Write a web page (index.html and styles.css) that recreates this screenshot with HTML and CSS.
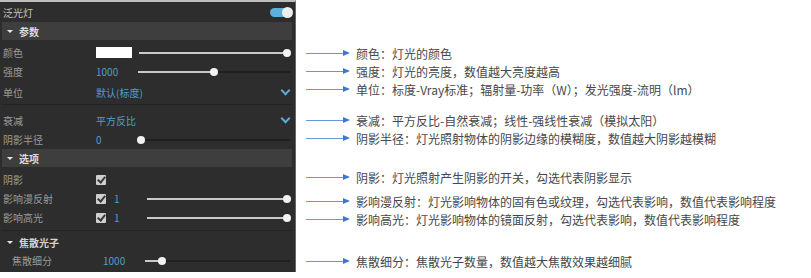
FILE: index.html
```html
<!DOCTYPE html>
<html lang="zh-CN">
<head>
  <meta charset="UTF-8">
  <title>泛光灯参数说明</title>
  <link rel="stylesheet" href="styles.css">
</head>
<body>
  <div class="page">
    <div class="panel">
      <div class="title">
        <span>泛光灯</span>
        <span class="toggle"><span class="toggle-knob"></span></span>
      </div>

      <div class="section"><span class="caret"></span>参数</div>
      <div class="row first">
        <span class="label">颜色</span>
        <span class="swatch"></span>
        <div class="slider"><div class="fill" style="width: 98%"></div><span class="knob" style="left: 98%"></span></div>
      </div>
      <div class="row">
        <span class="label">强度</span>
        <span class="value num">1000</span>
        <div class="slider"><div class="fill" style="width: 50%"></div><span class="knob" style="left: 50%"></span></div>
      </div>
      <div class="row select">
        <span class="label">单位</span>
        <span class="value">默认(标度)</span>
        <span class="chevron"></span>
      </div>
      <div class="divider"></div>
      <div class="row select gap">
        <span class="label">衰减</span>
        <span class="value">平方反比</span>
        <span class="chevron"></span>
      </div>
      <div class="row">
        <span class="label">阴影半径</span>
        <span class="value num">0</span>
        <div class="slider"><div class="fill" style="width: 2%"></div><span class="knob" style="left: 2%"></span></div>
      </div>

      <div class="section"><span class="caret"></span>选项</div>
      <div class="row first">
        <span class="label">阴影</span>
        <span class="check"></span>
      </div>
      <div class="row">
        <span class="label">影响漫反射</span>
        <span class="check"></span>
        <span class="value small">1</span>
        <div class="slider"><div class="fill" style="width: 98%"></div><span class="knob" style="left: 98%"></span></div>
      </div>
      <div class="row">
        <span class="label">影响高光</span>
        <span class="check"></span>
        <span class="value small">1</span>
        <div class="slider"><div class="fill" style="width: 98%"></div><span class="knob" style="left: 98%"></span></div>
      </div>
      <div class="divider low"></div>
      <div class="subsection"><span class="caret"></span>焦散光子</div>
      <div class="row sub">
        <span class="label">焦散细分</span>
        <span class="value num short">1000</span>
        <div class="slider"><div class="fill" style="width: 12%"></div><span class="knob" style="left: 12%"></span></div>
      </div>
    </div>

    <ul class="notes">
      <li class="g1"><span class="arrow"></span>颜色：灯光的颜色</li>
      <li><span class="arrow"></span>强度：灯光的亮度，数值越大亮度越高</li>
      <li><span class="arrow"></span>单位：标度-Vray标准；辐射量-功率（W）；发光强度-流明（lm）</li>
      <li class="g2"><span class="arrow"></span>衰减：平方反比-自然衰减；线性-强线性衰减（模拟太阳）</li>
      <li><span class="arrow"></span>阴影半径：灯光照射物体的阴影边缘的模糊度，数值越大阴影越模糊</li>
      <li class="g3"><span class="arrow"></span>阴影：灯光照射产生阴影的开关，勾选代表阴影显示</li>
      <li class="g4"><span class="arrow"></span>影响漫反射：灯光影响物体的固有色或纹理，勾选代表影响，数值代表影响程度</li>
      <li><span class="arrow"></span>影响高光：灯光影响物体的镜面反射，勾选代表影响，数值代表影响程度</li>
      <li class="g5"><span class="arrow"></span>焦散细分：焦散光子数量，数值越大焦散效果越细腻</li>
    </ul>
  </div>
</body>
</html>
```

FILE: styles.css
```css
body {
  margin: 0;
  background: #ffffff;
  font-family: "Noto Sans CJK SC", "Noto Sans", sans-serif;
}
.page {
  display: flex;
  align-items: flex-start;
}
.panel {
  width: 295px;
  height: 270px;
  background: #2d2d2d;
  border-top: 2px solid #bdbdbd;
  border-right: 1px solid #666;
  overflow: hidden;
  font-size: 10px;
  color: #9c9c9c;
}
.title {
  height: 20px;
  display: flex;
  align-items: center;
  justify-content: space-between;
  padding: 0 3px 0 3px;
  color: #c4c4c4;
}
.toggle {
  width: 22px;
  height: 9px;
  border-radius: 5px;
  background: #5db0d9;
  position: relative;
}
.toggle-knob {
  position: absolute;
  right: -1px;
  top: -1px;
  width: 11px;
  height: 11px;
  border-radius: 50%;
  background: #eeeeee;
}
.section {
  height: 18px;
  margin: 0 3px 0 2px;
  background: #3e3e3e;
  display: flex;
  align-items: center;
  color: #dcdcdc;
  font-weight: bold;
}
.caret {
  width: 0;
  height: 0;
  border-left: 3px solid transparent;
  border-right: 3px solid transparent;
  border-top: 3px solid #e6e6e6;
  margin: 0 6px 0 5px;
}
.subsection {
  height: 18px;
  margin-top: 2px;
  display: flex;
  align-items: center;
  color: #d4d4d4;
  font-weight: bold;
  padding-left: 2px;
}
.row {
  height: 19px;
  display: flex;
  align-items: center;
  padding-right: 5px;
}
.row.first {
  margin-top: 3px;
}
.row.select {
  margin-top: 2px;
}
.row.gap {
  margin-top: 6px;
}
.label {
  width: 96px;
  flex: none;
  padding-left: 3px;
  box-sizing: border-box;
}
.row.sub .label {
  width: 103px;
  padding-left: 12px;
}
.value {
  color: #4f9fcc;
}
.value.num {
  width: 42px;
  flex: none;
}
.value.short {
  width: 42px;
}
.value.small {
  width: 41px;
  flex: none;
  padding-left: 8px;
  box-sizing: border-box;
}
.swatch {
  width: 36px;
  height: 11px;
  background: #ffffff;
  flex: none;
  margin-right: 7px;
}
.slider {
  flex: 1;
  height: 2px;
  background: #1f1f1f;
  position: relative;
}
.fill {
  height: 2px;
  background: #c9c9c9;
}
.knob {
  position: absolute;
  top: -3px;
  width: 8px;
  height: 8px;
  margin-left: -4px;
  border-radius: 50%;
  background: #f2f2f2;
}
.chevron {
  margin-left: auto;
  margin-right: 1px;
  width: 5px;
  height: 5px;
  border-right: 2px solid #5aa8d4;
  border-bottom: 2px solid #5aa8d4;
  transform: translateY(-2px) rotate(45deg);
}
.divider {
  height: 1px;
  background: #242424;
  margin: 2px 3px 0 2px;
}
.divider.low {
  margin-top: 3px;
}
.check {
  width: 10px;
  height: 10px;
  flex: none;
  border-radius: 1px;
  background: #cfcfcf;
  position: relative;
}
.check::after {
  content: "";
  position: absolute;
  left: 3px;
  top: 0px;
  width: 3px;
  height: 6px;
  border-right: 2px solid #3a3a3a;
  border-bottom: 2px solid #3a3a3a;
  transform: rotate(40deg);
}
.notes {
  list-style: none;
  margin: 44px 0 0 10px;
  padding: 0;
  font-size: 12px;
  color: #474747;
}
.notes li {
  height: 18px;
  display: flex;
  align-items: center;
  white-space: nowrap;
}
.notes .g2 {
  margin-top: 13px;
}
.notes .g3 {
  margin-top: 21px;
}
.notes .g4 {
  margin-top: 6px;
}
.notes .g5 {
  margin-top: 24px;
}
.arrow {
  width: 37px;
  height: 1px;
  background: #6a95da;
  position: relative;
  margin-right: 13px;
  flex: none;
}
.arrow::after {
  content: "";
  position: absolute;
  right: -7px;
  top: -3px;
  border-top: 3.5px solid transparent;
  border-bottom: 3.5px solid transparent;
  border-left: 7px solid #3f76d4;
}
```
